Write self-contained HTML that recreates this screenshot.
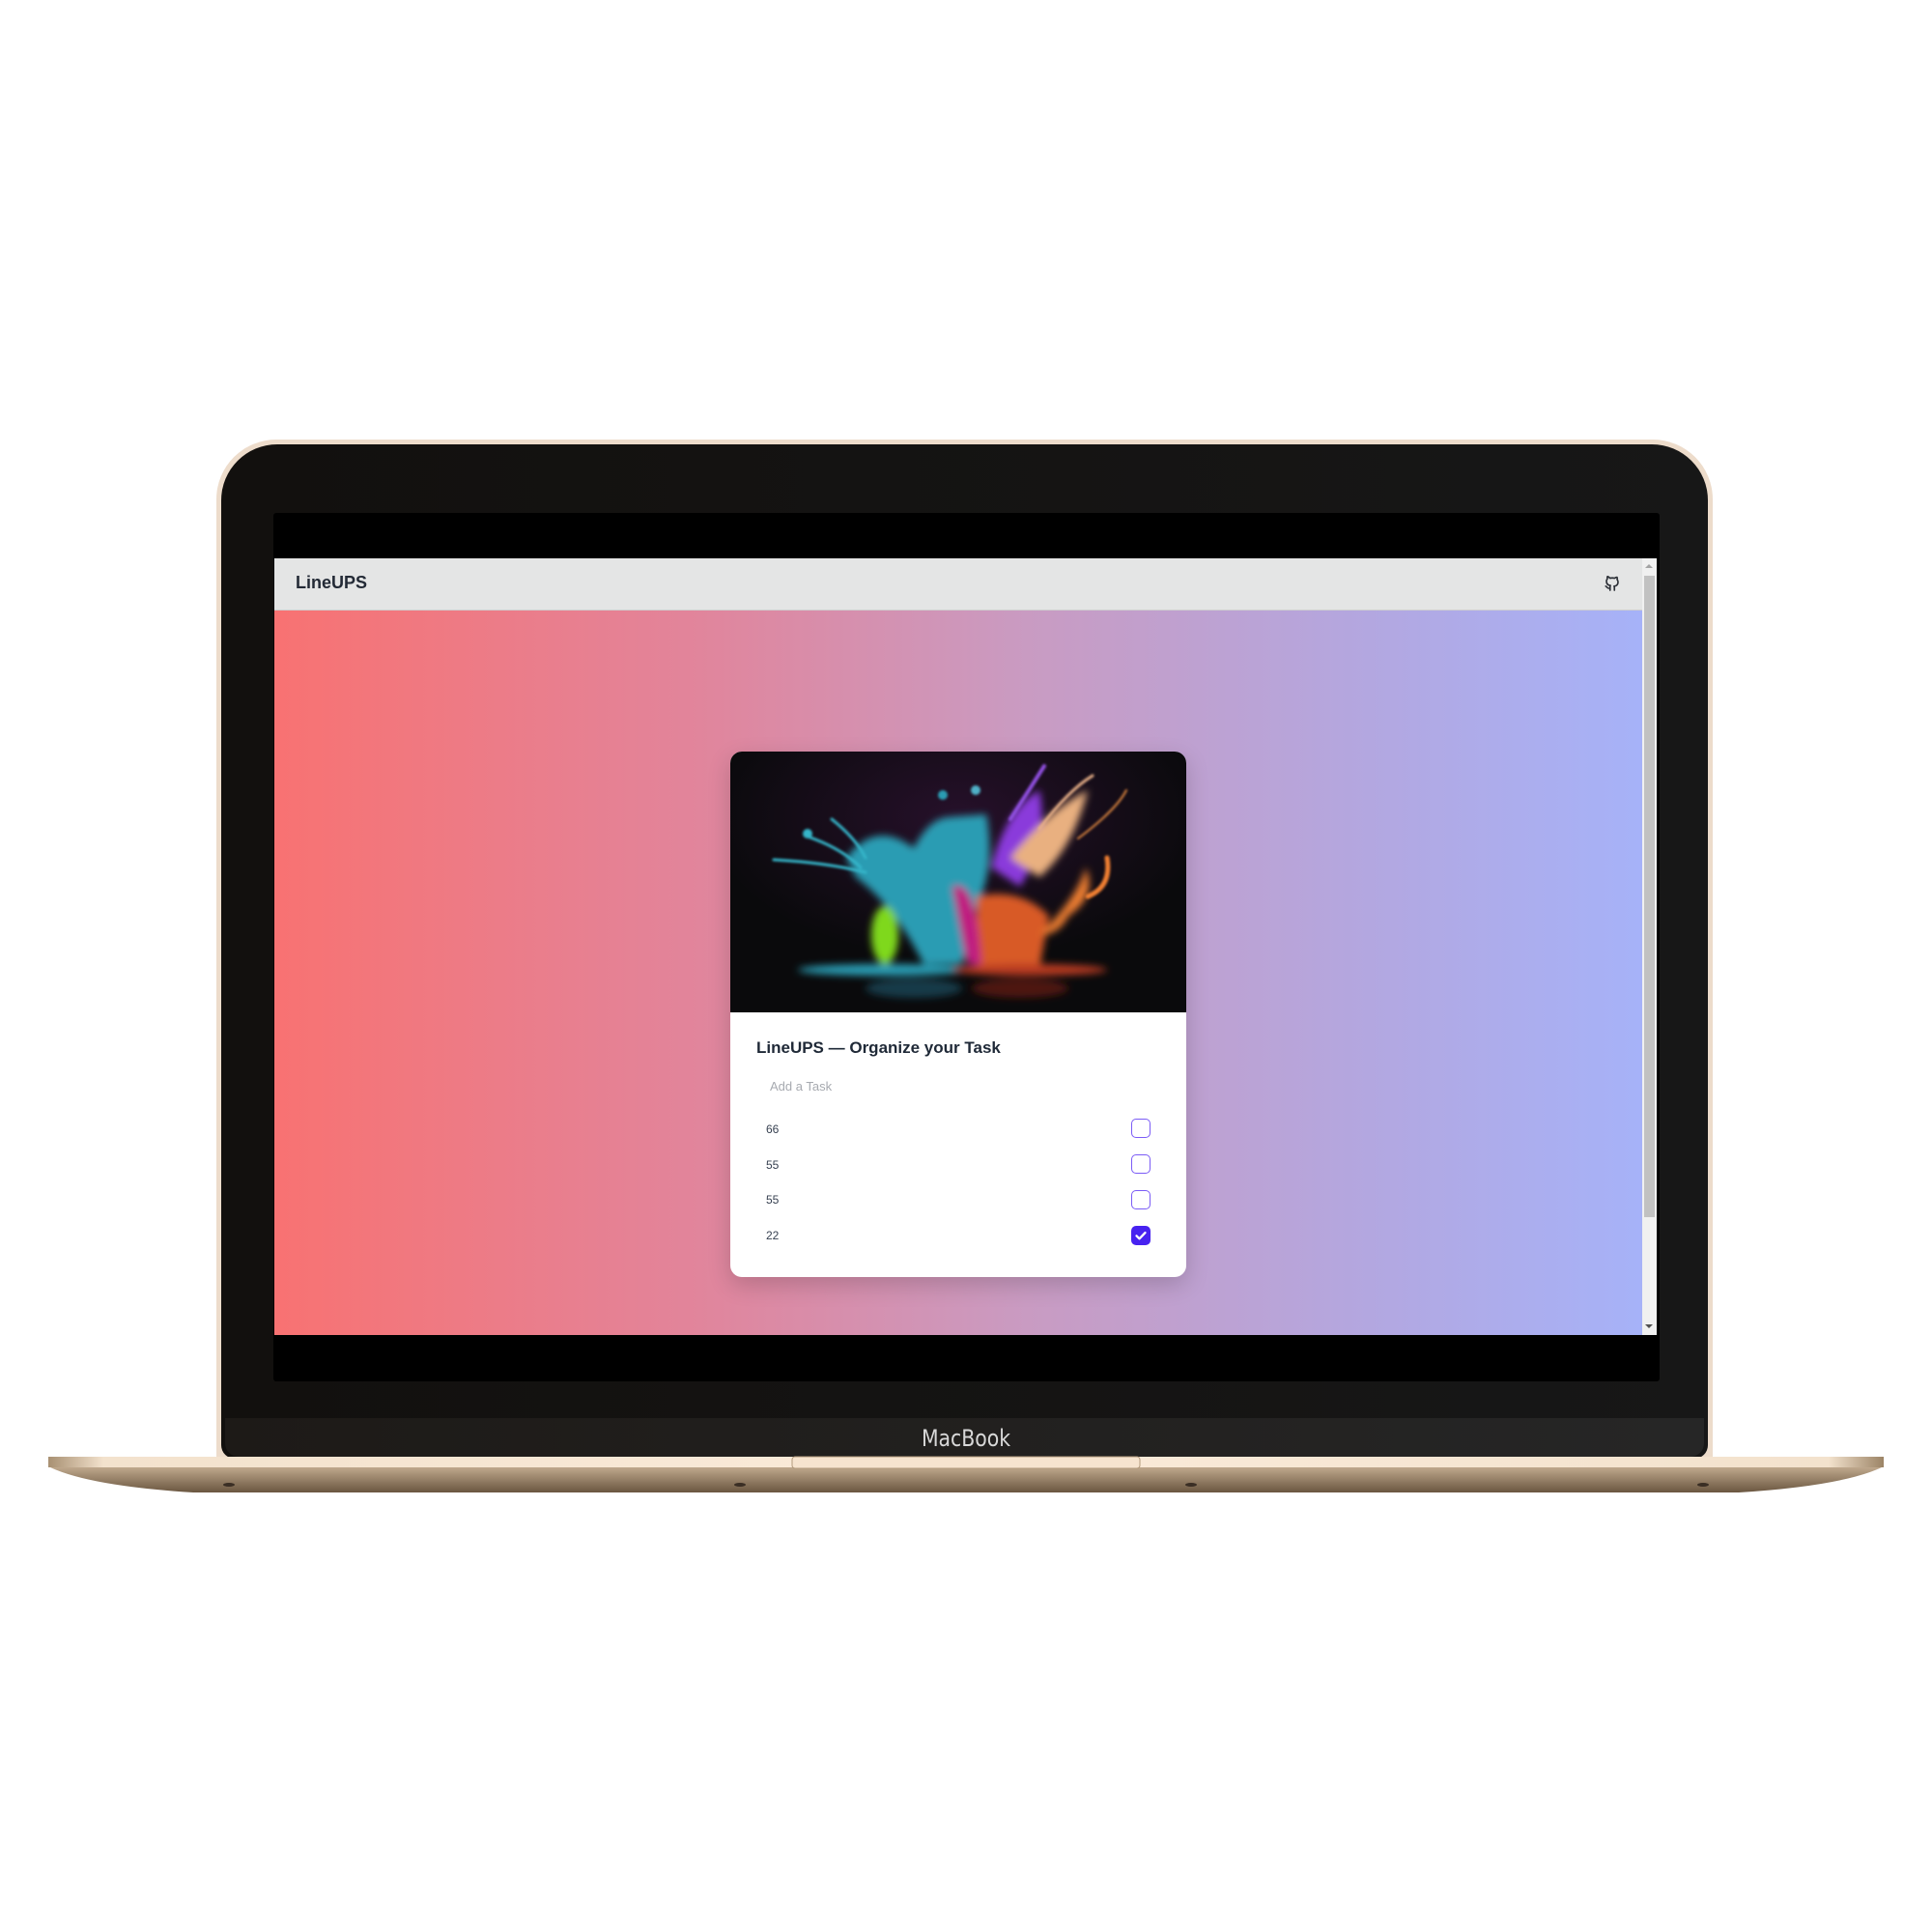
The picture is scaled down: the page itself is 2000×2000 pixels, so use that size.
<!DOCTYPE html>
<html><head><meta charset="utf-8"><style>
*{margin:0;padding:0;box-sizing:border-box}
body{width:2000px;height:2000px;background:#fff;position:relative;overflow:hidden;font-family:"Liberation Sans",Arial,sans-serif}
.abs{position:absolute}
</style></head><body>
<!-- lid -->
<div class="abs" style="left:224px;top:455px;width:1549px;height:1060px;border-radius:62px 62px 0 0;background:#eddccb"></div>
<div class="abs" style="left:229px;top:460px;width:1539px;height:1050px;border-radius:58px 58px 14px 14px;background:linear-gradient(90deg,#12100e,#171717);"></div>
<div class="abs" style="left:233px;top:1468px;width:1531px;height:40px;background:linear-gradient(90deg,#1d1a17,#262626);border-radius:0 0 14px 14px"></div>
<div class="abs" style="left:0;width:2000px;top:1475px;text-align:center;color:#d8d8d8;font-size:24px;font-family:'DejaVu Sans',sans-serif;transform:scaleX(0.85)">MacBook</div>
<!-- screen -->
<div class="abs" style="left:283px;top:531px;width:1435px;height:899px;background:#000;border-radius:3px"></div>
<div class="abs" style="left:284px;top:578px;width:1431px;height:54px;background:#e4e5e5"></div>
<div class="abs" style="left:284px;top:631px;width:1416px;height:1px;background:#cfcfcf"></div>
<div class="abs" style="left:306px;top:593px;font-size:18px;font-weight:bold;color:#232a36">LineUPS</div>
<svg class="abs" style="left:1660px;top:594px" width="18" height="19" viewBox="0 0 24 24" fill="none" stroke="#2b2f36" stroke-width="2.2" stroke-linecap="round" stroke-linejoin="round"><path d="M9 19c-4 1.5-4-2-6-2.5M15 22v-3.5c0-1 .1-1.4-.5-2 2.8-.3 5.5-1.4 5.5-6a4.6 4.6 0 0 0-1.3-3.2 4.2 4.2 0 0 0-.1-3.2s-1.1-.3-3.5 1.3a12 12 0 0 0-6.2 0C6.5 2.8 5.4 3.1 5.4 3.1a4.2 4.2 0 0 0-.1 3.2A4.6 4.6 0 0 0 4 9.5c0 4.6 2.7 5.7 5.5 6-.6.6-.6 1.2-.5 2V22"/></svg>
<div class="abs" style="left:284px;top:632px;width:1416px;height:750px;background:linear-gradient(90deg,#f87272,#e2849a 30%,#c99bc2 55%,#b3a7e0 80%,#a6b2f8)"></div>
<div class="abs" style="left:1700px;top:578px;width:15px;height:804px;background:#f0f0f0"></div>
<div class="abs" style="left:1702px;top:596px;width:11px;height:664px;background:#c1c1c1"></div>
<div class="abs" style="left:1703px;top:584px;width:0;height:0;border-left:4px solid transparent;border-right:4px solid transparent;border-bottom:4px solid #a3a3a3"></div>
<div class="abs" style="left:1703px;top:1371px;width:0;height:0;border-left:4px solid transparent;border-right:4px solid transparent;border-top:4px solid #505050"></div>
<!-- card -->
<div class="abs" style="left:756px;top:778px;width:472px;height:544px;background:#fff;border-radius:12px;box-shadow:0 8px 24px rgba(0,0,0,.18);overflow:hidden">
<svg width="472" height="270" viewBox="0 0 472 270" style="display:block">
<defs><filter id="b" x="-50%" y="-50%" width="200%" height="200%"><feGaussianBlur stdDeviation="4"/></filter><filter id="s" x="-50%" y="-50%" width="200%" height="200%"><feGaussianBlur stdDeviation="1.2"/></filter>
<radialGradient id="bg" cx="50%" cy="25%" r="55%"><stop offset="0" stop-color="#26102a"/><stop offset="1" stop-color="#0a0a0c"/></radialGradient></defs>
<rect width="472" height="270" fill="url(#bg)"/>
<g filter="url(#b)">
<path d="M120 110 Q150 70 190 100 Q205 70 225 68 L265 65 Q275 120 255 160 L240 220 L200 220 Q170 160 130 130 Z" fill="#2a9cb3"/>
<ellipse cx="160" cy="190" rx="14" ry="30" fill="#7fd81e"/>
<path d="M270 120 Q285 60 320 40 Q330 90 300 140 Z" fill="#8a3bdb"/>
<path d="M290 110 Q330 60 370 40 Q355 100 320 130 Z" fill="#e9b080"/>
<path d="M255 150 Q300 140 330 170 L320 225 L255 225 Z" fill="#d85a28"/>
<path d="M368 120 Q380 150 350 170 Q340 190 320 190 Q360 150 368 120 Z" fill="#f07f30"/>
<path d="M230 140 Q255 130 260 220 L245 220 Z" fill="#c01a80"/>
<ellipse cx="160" cy="226" rx="90" ry="6" fill="#2a9cb3"/>
<ellipse cx="310" cy="226" rx="80" ry="6" fill="#b83a20"/>
<ellipse cx="190" cy="245" rx="50" ry="10" fill="#1f5a70" opacity=".6"/>
<ellipse cx="300" cy="245" rx="50" ry="10" fill="#7a2010" opacity=".6"/>
</g>
<g filter="url(#s)" stroke-linecap="round" fill="none">
<path d="M45 112 Q100 115 140 125 M80 88 Q115 100 135 120 M105 70 Q130 90 140 110" stroke="#35b5c9" stroke-width="3"/>
<path d="M290 70 L325 15" stroke="#9050e0" stroke-width="4"/>
<path d="M320 80 Q350 40 375 25" stroke="#e8b088" stroke-width="3"/>
<path d="M360 90 Q400 60 410 40" stroke="#e08840" stroke-width="2"/>
<path d="M370 150 Q395 140 390 110" stroke="#f07f30" stroke-width="5"/>
<circle cx="80" cy="85" r="5" fill="#35b5c9"/><circle cx="220" cy="45" r="5" fill="#2a9cb3"/><circle cx="254" cy="40" r="5" fill="#4fb0c8"/>
</g>
</svg>
<div style="position:absolute;left:27px;top:297px;font-size:17px;font-weight:bold;color:#1f2937">LineUPS — Organize your Task</div>
<div style="position:absolute;left:41px;top:339px;font-size:13px;color:#a7aab0">Add a Task</div>
<div style="position:absolute;left:37px;top:384px;font-size:12px;color:#374151">66</div>
<div style="position:absolute;left:37px;top:421px;font-size:12px;color:#374151">55</div>
<div style="position:absolute;left:37px;top:457px;font-size:12px;color:#374151">55</div>
<div style="position:absolute;left:37px;top:494px;font-size:12px;color:#374151">22</div>
<div style="position:absolute;left:415px;top:380px;width:20px;height:20px;border:1.5px solid #7b5cf6;border-radius:5px"></div>
<div style="position:absolute;left:415px;top:417px;width:20px;height:20px;border:1.5px solid #7b5cf6;border-radius:5px"></div>
<div style="position:absolute;left:415px;top:454px;width:20px;height:20px;border:1.5px solid #7b5cf6;border-radius:5px"></div>
<div style="position:absolute;left:415px;top:491px;width:20px;height:20px;background:#4722f0;border-radius:5px">
<svg width="20" height="20" viewBox="0 0 20 20"><path d="M5.5 10.3l3 3 6-6.2" stroke="#fff" stroke-width="2.3" fill="none" stroke-linecap="round" stroke-linejoin="round"/></svg></div>
</div>
<!-- base -->
<svg class="abs" style="left:0;top:1500px" width="2000" height="60" viewBox="0 1500 2000 60">
<defs><linearGradient id="bs" x1="0" y1="0" x2="0" y2="1"><stop offset="0" stop-color="#c2ab8f"/><stop offset="1" stop-color="#6a5640"/></linearGradient>
<linearGradient id="tp" x1="0" x2="1"><stop offset="0" stop-color="#a89072"/><stop offset=".03" stop-color="#f3e2cd"/><stop offset=".5" stop-color="#fbebda"/><stop offset=".97" stop-color="#f3e2cd"/><stop offset="1" stop-color="#9c8466"/></linearGradient></defs>
<path d="M50 1518 Q90 1538 200 1545 L1800 1545 Q1910 1538 1950 1518 Z" fill="url(#bs)"/>
<rect x="50" y="1508" width="1900" height="11" fill="url(#tp)"/>
<rect x="820" y="1508" width="360" height="12" rx="3" fill="#f7e4cf" stroke="#b39a7c" stroke-width="1"/>
<ellipse cx="237" cy="1537" rx="6" ry="2" fill="#3a2e24"/>
<ellipse cx="766" cy="1537" rx="6" ry="2" fill="#3a2e24"/>
<ellipse cx="1233" cy="1537" rx="6" ry="2" fill="#3a2e24"/>
<ellipse cx="1763" cy="1537" rx="6" ry="2" fill="#3a2e24"/>
</svg>
</body></html>
